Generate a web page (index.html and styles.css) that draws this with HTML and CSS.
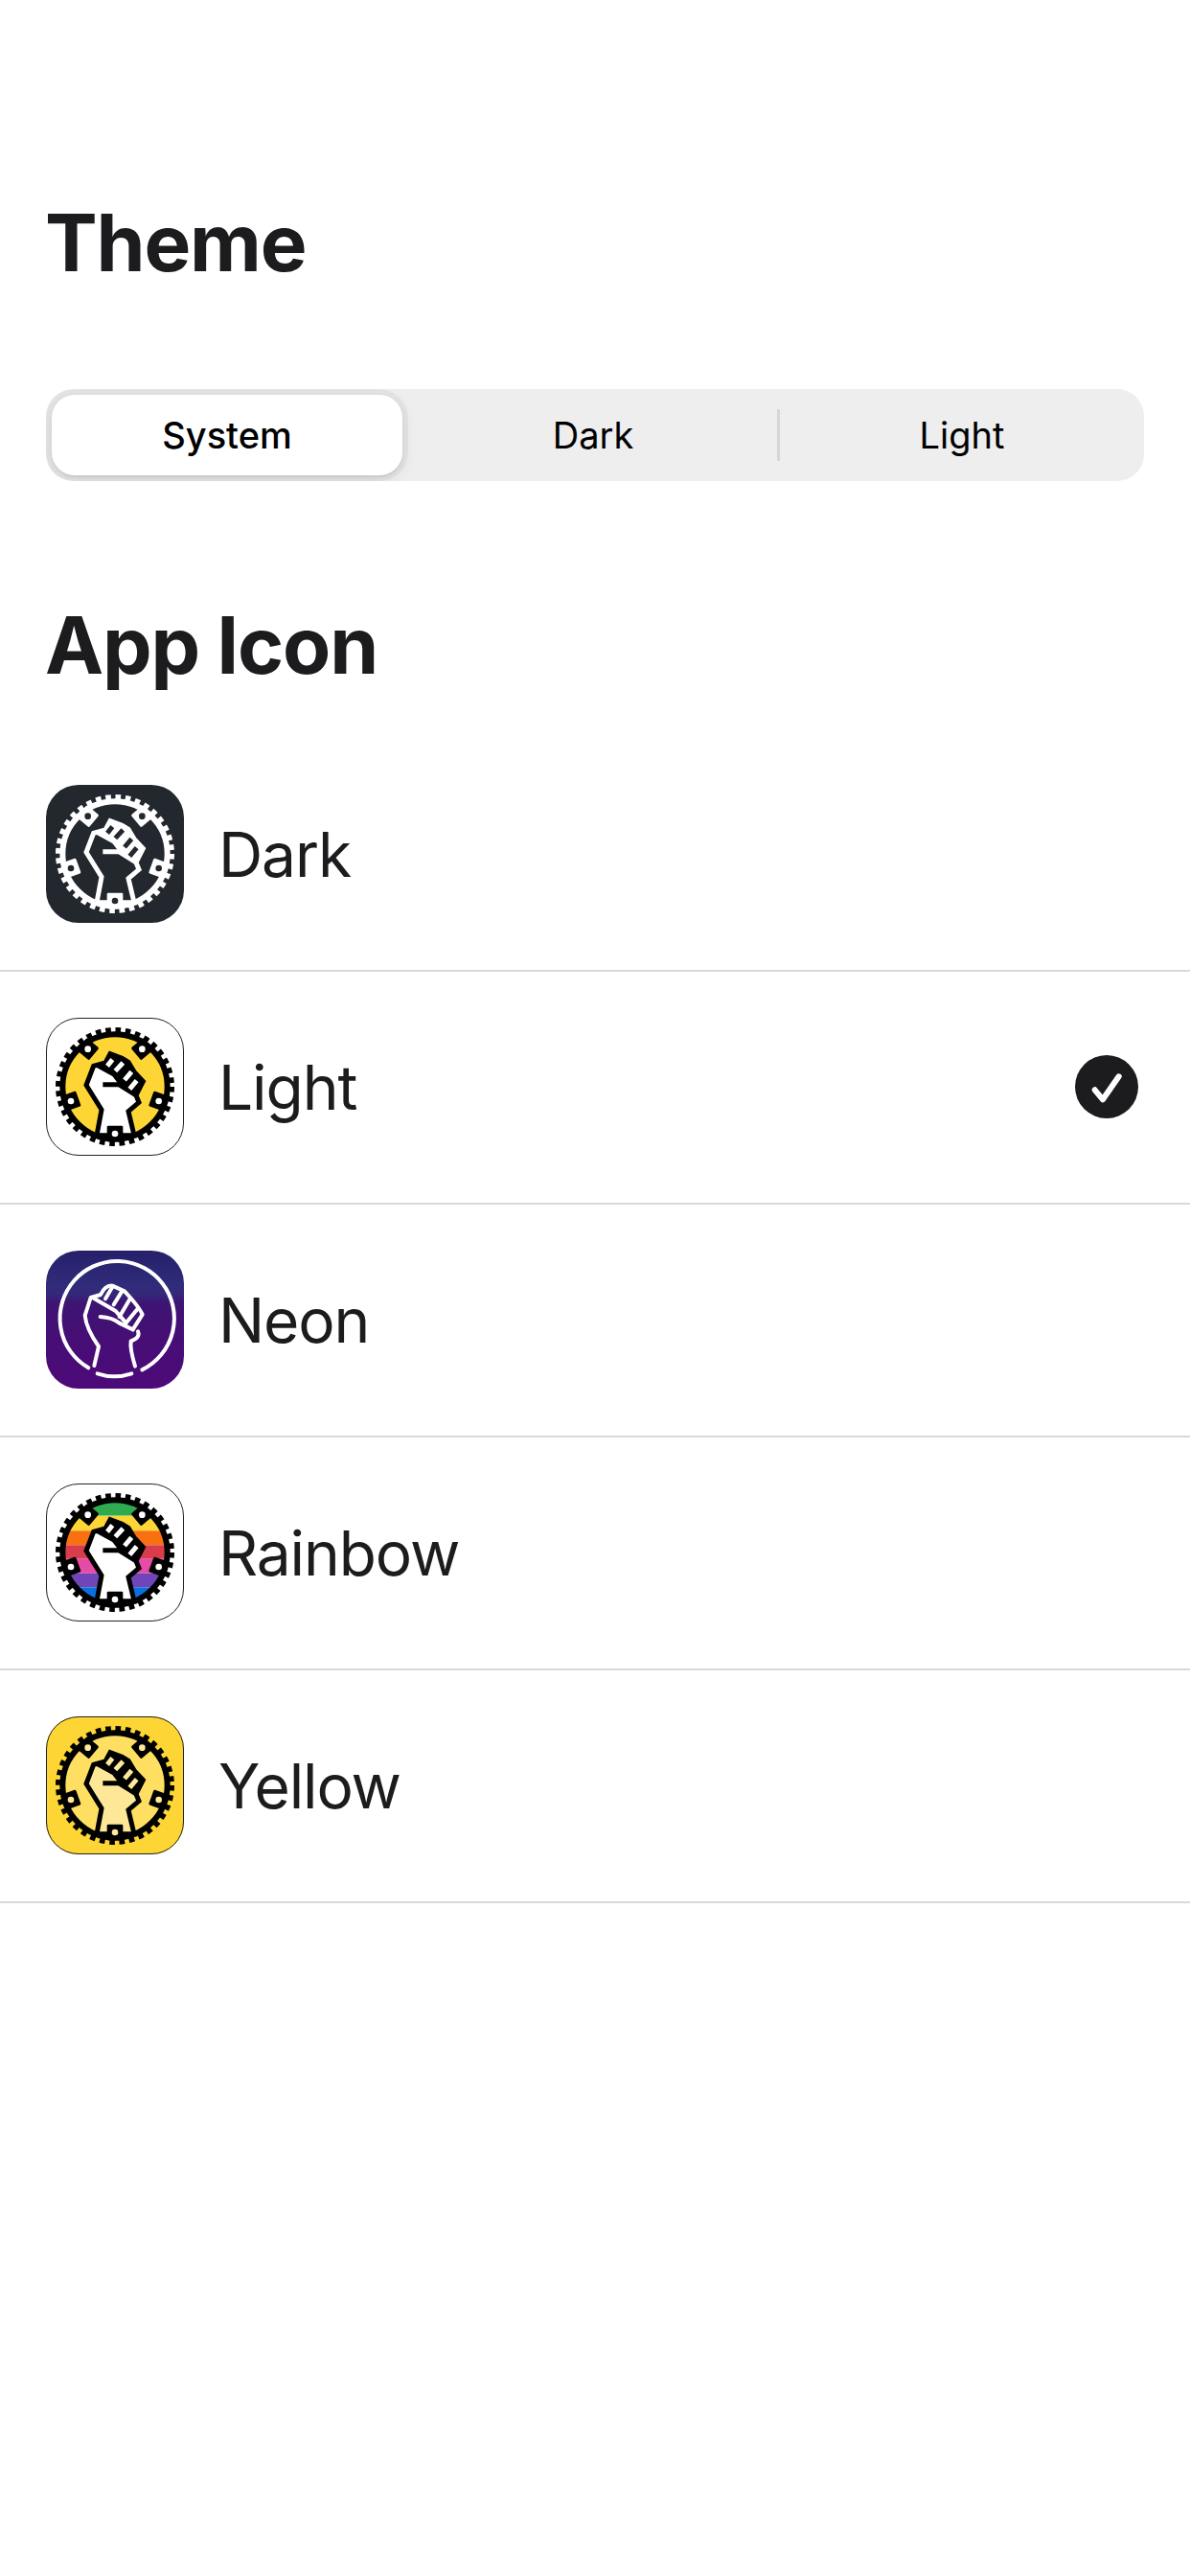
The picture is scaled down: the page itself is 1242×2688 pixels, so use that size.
FILE: index.html
```html
<!DOCTYPE html>
<html>
<head>
<title>Theme settings</title>
<link rel="stylesheet" href="styles.css">
</head>
<body>

<svg class="sprites" width="0" height="0">
  <defs>
    <g id="fist">
      <path class="fist-body" d="M213 425 L228 345 L180 268 L203 208 L240 198 L255 170 L292 184 L312 196 L330 226 L358 256 L336 300 L345 322 L312 350 L330 425 Z"/>
      <path class="fist-band" d="M203 208 L240 198 L255 170 L292 184 L312 196 L330 226 L358 256 L336 300 L285 270 L262 240 Z"/>
      <path class="fist-line" d="M232 266 L282 266 L336 300"/>
      <path class="fist-slit" d="M246 208 L262 188 M271 224 L295 198 M300 252 L322 226 M316 280 L338 254"/>
    </g>

    <g id="gear">
      <circle class="gear-teeth" cx="270" cy="273" r="178"/>
      <circle class="gear-ring" cx="270" cy="273" r="164"/>
      <g class="gear-lug">
        <rect x="160" y="130" width="50" height="50" rx="4" transform="rotate(40 185 155)"/>
        <rect x="330" y="130" width="50" height="50" rx="4" transform="rotate(-40 355 155)"/>
        <rect x="107" y="293" width="50" height="50" rx="4" transform="rotate(-20 132 318)"/>
        <rect x="382" y="293" width="50" height="50" rx="4" transform="rotate(20 407 318)"/>
        <rect x="245" y="395" width="50" height="50" rx="4"/>
      </g>
      <g class="gear-hole">
        <circle cx="185" cy="155" r="10"/>
        <circle cx="355" cy="155" r="10"/>
        <circle cx="132" cy="318" r="10"/>
        <circle cx="407" cy="318" r="10"/>
        <circle cx="270" cy="420" r="10"/>
      </g>
    </g>

    <clipPath id="disc-clip"><circle cx="270" cy="273" r="165"/></clipPath>
  </defs>
</svg>

<main class="page">
  <h1 class="title title-theme">Theme</h1>

  <div class="segments">
    <div class="segment segment-active">System</div>
    <div class="segment segment-dark">Dark</div>
    <div class="segment segment-light">Light</div>
  </div>

  <h1 class="title title-icon">App Icon</h1>

  <ul class="icon-list">
    <li class="icon-row">
      <div class="tile tile-dark">
        <svg viewBox="54 57 432 432">
          <use href="#fist"/>
          <use href="#gear"/>
        </svg>
      </div>
      <span class="icon-name">Dark</span>
    </li>

    <li class="icon-row">
      <div class="tile tile-light">
        <svg viewBox="54 57 432 432">
          <circle class="disc" cx="270" cy="273" r="165"/>
          <use href="#fist"/>
          <use href="#gear"/>
        </svg>
      </div>
      <span class="icon-name">Light</span>
      <svg class="check" viewBox="0 0 66 66">
        <circle cx="33" cy="33" r="33" fill="#1c1c1e"/>
        <path d="M20.7 36.3 L29 46.3 L45.7 22.3" fill="none" stroke="#fff" stroke-width="6" stroke-linecap="round" stroke-linejoin="round"/>
      </svg>
    </li>

    <li class="icon-row">
      <div class="tile tile-neon">
        <svg viewBox="54 45 432 432">
          <g class="neon">
            <path d="M187 412 A179 179 0 1 1 355 418"/>
            <path d="M215 430 Q268 448 322 430"/>
            <path d="M205 405 L219 345 Q180 290 176 248 L194 192 L225 183 Q240 152 262 155 L300 172 L318 192 Q345 222 356 245 L326 292"/>
            <path d="M200 192 L272 234 L302 268 M262 158 L240 196 M292 172 L266 214 M318 194 L284 252 M342 226 L304 272"/>
            <path d="M224 252 Q262 254 284 272 L326 292"/>
            <path d="M342 298 Q350 318 320 328 Q316 350 333 407"/>
          </g>
        </svg>
      </div>
      <span class="icon-name">Neon</span>
    </li>

    <li class="icon-row">
      <div class="tile tile-rainbow">
        <svg viewBox="54 57 432 432">
          <g clip-path="url(#disc-clip)">
            <rect x="100" y="100" width="340" height="58" fill="#2eaa4f"/>
            <rect x="100" y="158" width="340" height="47" fill="#fdd535"/>
            <rect x="100" y="205" width="340" height="45" fill="#f87010"/>
            <rect x="100" y="250" width="340" height="43" fill="#d93c4a"/>
            <rect x="100" y="293" width="340" height="45" fill="#e84aa8"/>
            <rect x="100" y="338" width="340" height="44" fill="#6f45b8"/>
            <rect x="100" y="382" width="340" height="60" fill="#0a70dd"/>
          </g>
          <use href="#fist"/>
          <use href="#gear"/>
        </svg>
      </div>
      <span class="icon-name">Rainbow</span>
    </li>

    <li class="icon-row">
      <div class="tile tile-yellow">
        <svg viewBox="54 57 432 432">
          <circle class="disc" cx="270" cy="273" r="165"/>
          <use href="#fist"/>
          <use href="#gear"/>
        </svg>
      </div>
      <span class="icon-name">Yellow</span>
    </li>
  </ul>
</main>

</body>
</html>
```

FILE: styles.css
```css
body {
  margin: 0;
  background: #fff;
  color: #1c1c1e;
  font-family: Inter, "Liberation Sans", sans-serif;
}

.sprites {
  display: block;
  height: 0;
}

.title {
  margin: 0 47px;
  font-size: 82px;
  line-height: 96px;
  font-weight: 700;
  letter-spacing: -1.2px;
}
.title-theme {
  padding-top: 206px;
}
.title-icon {
  margin-top: 124px;
}

/* Theme switcher */
.segments {
  display: flex;
  height: 96px;
  margin: 104px 48px 0;
  padding: 6px 0 6px 6px;
  box-sizing: border-box;
  background: #eee;
  border-radius: 28px;
  overflow: hidden;
  color: #000;
  font-size: 38px;
  font-weight: 500;
}
.segment {
  display: flex;
  align-items: center;
  justify-content: center;
  box-sizing: border-box;
}
.segment-active {
  width: 366px;
  background: #fff;
  border-radius: 24px;
  box-shadow: 0 4px 16px rgba(0, 0, 0, 0.1), 0 2px 2px rgba(0, 0, 0, 0.06), 0 0 0 6px rgba(0, 0, 0, 0.035);
}
.segment-dark {
  width: 391px;
  padding-left: 7px;
  font-weight: 400;
}
.segment-light {
  flex: 1;
  margin: 15px 0;
  border-left: 3px solid #d6d6d6;
  font-weight: 400;
}

/* App icon rows */
.icon-list {
  margin: 49px 0 0;
  padding: 0;
  list-style: none;
}
.icon-row {
  display: flex;
  align-items: center;
  gap: 36px;
  padding: 48px 54px 49px 48px;
  border-bottom: 2px solid #d9d9d9;
}
.icon-name {
  flex: 1;
  font-size: 64px;
  line-height: 77px;
  font-weight: 430;
  letter-spacing: -1.1px;
}
.check {
  width: 66px;
  height: 66px;
}

.tile {
  width: 144px;
  height: 144px;
  box-sizing: border-box;
  border-radius: 34px;
  overflow: hidden;
}
.tile svg {
  display: block;
  width: 100%;
  height: 100%;
}

.disc {
  fill: var(--disc);
}
.fist-body {
  fill: var(--fist);
  stroke: var(--line);
  stroke-width: 15;
  stroke-linejoin: miter;
}
.fist-band {
  fill: var(--line);
}
.fist-line {
  fill: none;
  stroke: var(--line);
  stroke-width: 15;
}
.fist-slit {
  fill: none;
  stroke: var(--fist);
  stroke-width: 15;
}
.gear-teeth {
  fill: none;
  stroke: var(--line);
  stroke-width: 16;
  stroke-dasharray: 17 14.07;
}
.gear-ring {
  fill: none;
  stroke: var(--line);
  stroke-width: 18;
}
.gear-lug {
  fill: var(--line);
}
.gear-hole {
  fill: var(--hole);
}

.tile-dark {
  --line: #fff;
  --fist: #22282e;
  --hole: #22282e;
  background: #22282e;
}
.tile-light {
  --line: #000;
  --disc: #fdd535;
  --fist: #fff;
  --hole: #fff;
  background: #fff;
  outline: 1px solid #222;
  outline-offset: -1px;
}
.tile-rainbow {
  --line: #000;
  --fist: #fff;
  --hole: #fff;
  background: #fff;
  outline: 1px solid #222;
  outline-offset: -1px;
}
.tile-yellow {
  --line: #000;
  --disc: #fedf62;
  --fist: #fee898;
  --hole: #fee898;
  background: #fdd535;
  outline: 1px solid #222;
  outline-offset: -1px;
}
.tile-neon {
  background: linear-gradient(#26206b 0%, #302c7a 25%, #35277a 32%, #3d1472 38%, #480d76 70%, #4d0a78 100%);
}
.neon {
  fill: none;
  stroke: #fff;
  stroke-width: 12;
  stroke-linecap: round;
  stroke-linejoin: round;
}
```
